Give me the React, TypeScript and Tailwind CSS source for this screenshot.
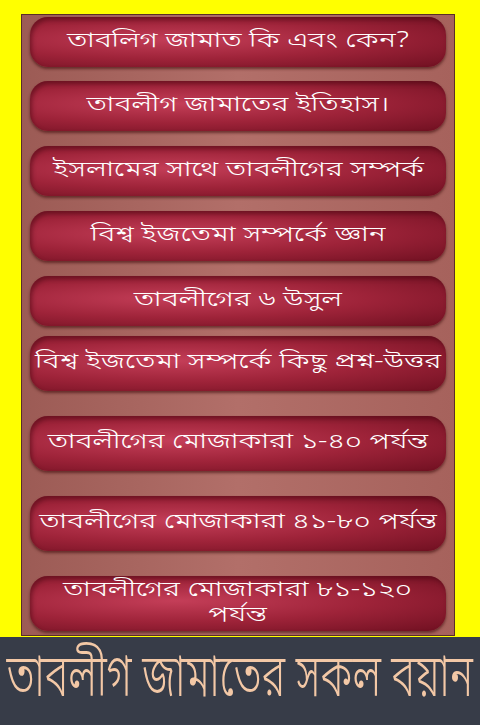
import React from "react";

const items: { t: React.ReactNode; h: string; mt: string }[] = [
  { t: "তাবলিগ জামাত কি এবং কেন?", h: "h-[50px]", mt: "mt-[2px]" },
  { t: "তাবলীগ জামাতের ইতিহাস।", h: "h-[50px]", mt: "mt-[14px]" },
  { t: "ইসলামের সাথে তাবলীগের সম্পর্ক", h: "h-[50px]", mt: "mt-[15px]" },
  { t: "বিশ্ব ইজতেমা সম্পর্কে জ্ঞান", h: "h-[50px]", mt: "mt-[15px]" },
  { t: "তাবলীগের ৬ উসুল", h: "h-[50px]", mt: "mt-[15px]" },
  { t: "বিশ্ব ইজতেমা সম্পর্কে কিছু প্রশ্ন-উত্তর", h: "h-[55px]", mt: "mt-[10px]" },
  { t: "তাবলীগের মোজাকারা ১-৪০ পর্যন্ত", h: "h-[55px]", mt: "mt-[25px]" },
  { t: "তাবলীগের মোজাকারা ৪১-৮০ পর্যন্ত", h: "h-[55px]", mt: "mt-[25px]" },
  {
    t: (
      <>
        তাবলীগের মোজাকারা ৮১-১২০
        <br />
        পর্যন্ত
      </>
    ),
    h: "h-[55px]",
    mt: "mt-[25px]",
  },
];

export default function App() {
  return (
    <div
      className="w-[480px] h-[725px] bg-[#ffff00] flex flex-col overflow-hidden"
      style={{ fontFamily: '"Noto Sans Bengali", "Noto Serif Bengali", "Lohit Bengali", "FreeSans", "Noto Sans", sans-serif' }}
    >
      <div className="pt-[14px] pl-[21px] pr-[25px] flex-1">
        <div className="h-[622px] border border-[#5a2e28] bg-[linear-gradient(90deg,#9c5b55_0%,#b26f69_50%,#a6625c_100%)] px-[8px] flex flex-col">
          {items.map((it, i) => (
            <div
              key={i}
              className={`${it.h} ${it.mt} rounded-[18px] flex items-center justify-center text-center text-white shadow-[0_2px_3px_rgba(60,10,10,0.6),inset_2px_3px_4px_rgba(70,5,15,0.5)] bg-[radial-gradient(ellipse_at_35%_45%,#c43e58_0%,#9e2339_50%,#701021_100%)]`}
            >
              <span className="inline-block text-[21px] leading-[25px] scale-x-[1.39] whitespace-nowrap font-light">
                {it.t}
              </span>
            </div>
          ))}
        </div>
      </div>
      <div className="h-[88px] bg-[#373c48] flex items-center justify-center overflow-hidden">
        <span className="inline-block whitespace-nowrap text-[#f3c8a6] text-[48px] leading-none scale-x-[0.84] scale-y-[1.25] font-light">
          তাবলীগ জামাতের সকল বয়ান
        </span>
      </div>
    </div>
  );
}
